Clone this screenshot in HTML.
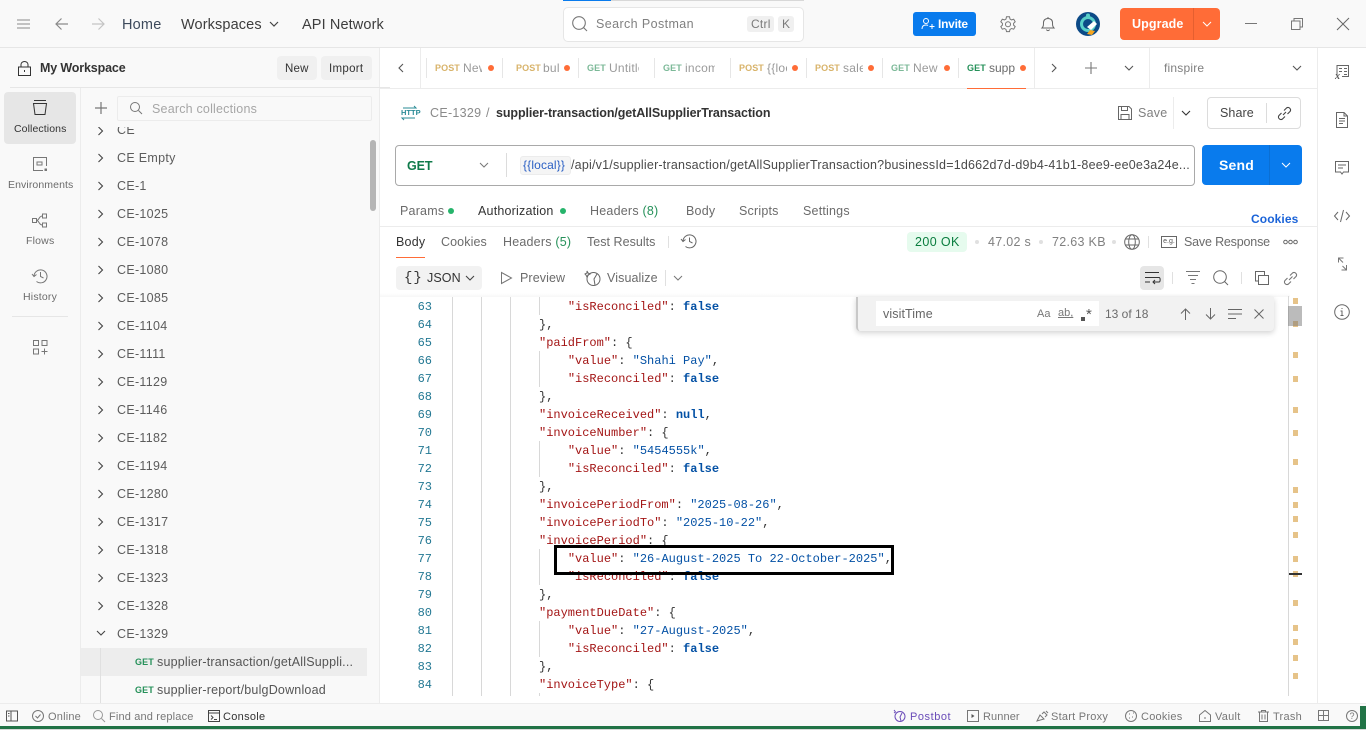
<!DOCTYPE html>
<html><head><meta charset="utf-8"><title>Postman</title>
<style>
html,body{margin:0;padding:0;background:#fff;}
body{width:1366px;height:730px;overflow:hidden;position:relative;font-family:"Liberation Sans",sans-serif;font-size:12px;color:#6b6b6b;}
.a{position:absolute;}
.t{position:absolute;white-space:nowrap;line-height:16px;letter-spacing:.25px;}
svg.a{fill:none;stroke:#6b6b6b;stroke-width:1;overflow:visible;}
.c{left:117px;color:#5c5c5c;font-size:12.5px;letter-spacing:.3px;}
.m{font-size:9px;font-weight:bold;letter-spacing:.1px;}
.p{color:#d8b36a;}.g{color:#7cb998;}
.n{color:#9a9a9a;overflow:hidden;}
.d{position:absolute;width:6px;height:6px;border-radius:50%;background:#ff6c37;top:65px;}
.s{position:absolute;width:1px;height:20px;top:58px;background:#e6e6e6;}
.mk{position:absolute;left:1293px;width:5px;height:6px;background:#e6c389;}
#code{position:absolute;margin:0;font:12px/18px "Liberation Mono",monospace;color:#333;white-space:pre;}
#nums{position:absolute;width:36px;margin:0;font:12px/18px "Liberation Mono",monospace;color:#237893;text-align:right;white-space:pre;}
.k{color:#a31515;}.v{color:#0451a5;}.b{color:#0451a5;font-weight:bold;}
</style></head><body>

<!-- top bar -->
<div class="a" style="left:0;top:0;width:1366px;height:47px;background:#f9f9f9;border-bottom:1px solid #e6e6e6;"></div>
<div class="a" style="left:563px;top:0;width:48px;height:1px;background:#097bed;"></div>
<div class="a" style="left:611px;top:0;width:193px;height:1px;background:#d8d8d8;"></div>
<svg class="a" style="left:17px;top:18px" width="14" height="12"><path d="M0 2h13M0 6h13M0 10h13" stroke="#8a8a8a"/></svg>
<svg class="a" style="left:55px;top:17px" width="14" height="14"><path d="M13 7H1M6.500 1.500L1 7l5.500 5.500" stroke="#8a8a8a" stroke-width="1.200"/></svg>
<svg class="a" style="left:91px;top:17px" width="14" height="14"><path d="M1 7h12M7.500 1.500L13 7l-5.500 5.500" stroke="#c4c4c4" stroke-width="1.200"/></svg>
<div class="t" style="left:122px;top:17px;font-size:14.500px;color:#3d4a5c;letter-spacing:.2px;">Home</div>
<div class="t" style="left:181px;top:17px;font-size:14.500px;color:#3d3d3d;letter-spacing:.12px;">Workspaces</div>
<svg class="a" style="left:269px;top:21px" width="10" height="7"><path d="M1 1l4 4 4-4" stroke="#444" stroke-width="1.200"/></svg>
<div class="t" style="left:302px;top:17px;font-size:14.500px;color:#3d3d3d;letter-spacing:.12px;">API Network</div>

<div class="a" style="left:563px;top:7px;width:239px;height:33px;background:#fff;border:1px solid #e6e6e6;border-radius:5px;"></div>
<svg class="a" style="left:572px;top:16px" width="16" height="16"><circle cx="7" cy="7" r="6.300" stroke="#777" stroke-width="1.100"/><path d="M11.500 11.500L15 15" stroke="#777" stroke-width="1.100"/></svg>
<div class="t" style="left:596px;top:16px;font-size:12.500px;color:#808080;letter-spacing:.4px;">Search Postman</div>
<div class="a" style="left:747px;top:16px;width:27px;height:16px;background:#f0f0f0;border-radius:3px;"></div>
<div class="t" style="left:751px;top:16px;font-size:12px;color:#7a7a7a;">Ctrl</div>
<div class="a" style="left:778px;top:16px;width:16px;height:16px;background:#f0f0f0;border-radius:3px;"></div>
<div class="t" style="left:782px;top:16px;font-size:12px;color:#7a7a7a;">K</div>

<div class="a" style="left:913px;top:12px;width:63px;height:24px;background:#097bed;border-radius:3px;"></div>
<svg class="a" style="left:921px;top:18px" width="14" height="12"><circle cx="5" cy="3" r="2.500" stroke="#fff"/><path d="M1 11c0-3 2-4 4-4 1 0 1.600.2 2 .5M11 6v5M8.500 8.500h5" stroke="#fff"/></svg>
<div class="t" style="left:938px;top:16px;font-size:12px;font-weight:bold;color:#fff;letter-spacing:-.25px;">Invite</div>
<svg class="a" style="left:1000px;top:16px" width="16" height="16"><path d="M6.500 .8h3l.5 2.200 1.600.9 2.100-.7 1.500 2.600-1.600 1.500v1.800l1.600 1.500-1.500 2.600-2.100-.7-1.600.9-.5 2.200h-3l-.5-2.200-1.600-.9-2.100.7L.8 10.600l1.600-1.500V7.300L.8 5.800l1.500-2.600 2.100.7L6 3z" stroke="#777"/><circle cx="8" cy="8.200" r="2.500" stroke="#777"/></svg>
<svg class="a" style="left:1041px;top:16px" width="14" height="16"><path d="M1 12h12c-1.500-1.500-1.500-3-1.500-5.500C11.500 4 9.500 2.500 7 2.500S2.500 4 2.500 6.500C2.500 9 2.500 10.500 1 12zM5.500 13.500c.5 1.500 2.500 1.500 3 0M7 1v1.500" stroke="#666"/></svg>
<svg class="a" style="left:1076px;top:12px" width="24" height="24"><circle cx="12" cy="12" r="12" fill="#0c4a87" stroke="none"/><circle cx="12" cy="12" r="6.500" stroke="#58cfc8" stroke-width="3"/><circle cx="12" cy="3.500" r="2" fill="#58cfc8" stroke="none"/><path d="M11 15l7-6 3 3-6 6z" fill="#fff" stroke="none"/><path d="M11 22l3-4 5 1-3 4z" fill="#f8a51f" stroke="none"/></svg>
<div class="a" style="left:1120px;top:8px;width:100px;height:32px;background:#ff6c37;border-radius:4px;"></div>
<div class="a" style="left:1193px;top:8px;width:1px;height:32px;background:#e55f2f;"></div>
<div class="t" style="left:1132px;top:16px;font-size:12.500px;font-weight:bold;color:#fff;letter-spacing:.1px;">Upgrade</div>
<svg class="a" style="left:1202px;top:21px" width="10" height="7"><path d="M1 1l4 4 4-4" stroke="#fff"/></svg>
<div class="a" style="left:1245px;top:23px;width:12px;height:1px;background:#777;"></div>
<svg class="a" style="left:1291px;top:18px" width="12" height="12"><path d="M.5 3h8.500v8.500H.5zM3 3V.500h8.500V9H9" stroke="#777"/></svg>
<svg class="a" style="left:1337px;top:18px" width="12" height="12"><path d="M0 0l12 12M12 0L0 12" stroke="#666"/></svg>

<!-- sidebar background -->
<div class="a" style="left:0;top:48px;width:380px;height:655px;background:#f9f9f9;border-right:1px solid #ececec;box-sizing:border-box;"></div>
<div class="a" style="left:10px;top:87px;width:380px;height:1px;background:#e6e6e6;"></div>
<div class="a" style="left:80px;top:88px;width:1px;height:615px;background:#ececec;"></div>
<svg class="a" style="left:18px;top:61px" width="13" height="15"><path d="M.5 6h12v8.500H.5zM3 6V3.500a3.500 3 0 0 1 7 0V6M6.500 9v2" stroke="#333"/></svg>
<div class="t" style="left:40px;top:60px;font-size:12.500px;font-weight:bold;color:#333;letter-spacing:-.15px;">My Workspace</div>
<div class="a" style="left:277px;top:56px;width:40px;height:24px;background:#f0f0f0;border-radius:4px;"></div>
<div class="t" style="left:285px;top:61px;color:#333;font-size:11.500px;letter-spacing:.2px;">New</div>
<div class="a" style="left:321px;top:56px;width:51px;height:24px;background:#f0f0f0;border-radius:4px;"></div>
<div class="t" style="left:329px;top:61px;color:#333;font-size:11.500px;letter-spacing:.3px;">Import</div>

<!-- rail -->
<div class="a" style="left:4px;top:92px;width:72px;height:52px;background:#e6e6e6;border-radius:4px;"></div>
<svg class="a" style="left:33px;top:100px" width="14" height="15"><path d="M1 .5h12M.5 3.500h13l-1.500 11H2z" stroke="#333"/></svg>
<div class="t" style="left:14px;top:121px;font-size:10.500px;color:#333;letter-spacing:.1px;">Collections</div>
<svg class="a" style="left:33px;top:157px" width="14" height="14"><path d="M13.500 9V.5H.5v13H10M4 5h5v3H4z" stroke="#777"/><path d="M11.500 11.500h2.500v2.500h-2.500z" fill="#777" stroke="none"/></svg>
<div class="t" style="left:8px;top:177px;font-size:10.500px;color:#6b6b6b;letter-spacing:.1px;">Environments</div>
<svg class="a" style="left:32px;top:213px" width="16" height="15"><path d="M.5 5.500h4v4h-4zM10.500 1h4v4h-4zM10.500 10h4v4h-4zM4.500 7.500c3 0 2-4.500 6-4.500M4.500 7.500c3 0 2 4.500 6 4.500" stroke="#777"/></svg>
<div class="t" style="left:26px;top:233px;font-size:10.500px;color:#6b6b6b;letter-spacing:.2px;">Flows</div>
<svg class="a" style="left:32px;top:268px" width="16" height="16"><path d="M2 8.500A6.500 6.500 0 1 1 4.500 13.500M0 6l2 2.500L4.500 6.500M8.500 4v4.500l3 1.500" stroke="#777"/></svg>
<div class="t" style="left:23px;top:289px;font-size:10.500px;color:#6b6b6b;letter-spacing:.2px;">History</div>
<div class="a" style="left:12px;top:316px;width:56px;height:1px;background:#e6e6e6;"></div>
<svg class="a" style="left:33px;top:340px" width="15" height="15"><path d="M.5.500h5v5h-5zM9 .5h5v5H9zM.5 9h5v5h-5zM8.500 11.500h6M11.500 8.500v6" stroke="#777"/></svg>

<!-- collections search -->
<svg class="a" style="left:95px;top:102px" width="12" height="12"><path d="M6 0v12M0 6h12" stroke="#777" stroke-width="1.200"/></svg>
<div class="a" style="left:117px;top:96px;width:253px;height:23px;border:1px solid #ececec;border-radius:2px;"></div>
<svg class="a" style="left:130px;top:102px" width="12" height="12"><circle cx="5" cy="5" r="4.500" stroke="#777"/><path d="M8.500 8.500L12 12" stroke="#777"/></svg>
<div class="t" style="left:152px;top:101px;font-size:12.500px;color:#a6a6a6;letter-spacing:.2px;">Search collections</div>

<!-- tree -->
<div class="a" style="left:81px;top:122px;width:290px;height:581px;overflow:hidden;">
 <div class="a" style="left:0;top:526px;width:286px;height:28px;background:#ededed;"></div>
 <div class="a" style="left:19px;top:526px;width:1px;height:55px;background:#e0e0e0;"></div>
 <svg class="a" style="left:16px;top:4px" width="8" height="10"><path d="M1.500 1l4 4-4 4" stroke="#444" stroke-width="1.100"/></svg>
 <svg class="a" style="left:16px;top:31px" width="8" height="10"><path d="M1.500 1l4 4-4 4" stroke="#444" stroke-width="1.100"/></svg>
 <svg class="a" style="left:16px;top:59px" width="8" height="10"><path d="M1.500 1l4 4-4 4" stroke="#444" stroke-width="1.100"/></svg>
 <svg class="a" style="left:16px;top:87px" width="8" height="10"><path d="M1.500 1l4 4-4 4" stroke="#444" stroke-width="1.100"/></svg>
 <svg class="a" style="left:16px;top:115px" width="8" height="10"><path d="M1.500 1l4 4-4 4" stroke="#444" stroke-width="1.100"/></svg>
 <svg class="a" style="left:16px;top:143px" width="8" height="10"><path d="M1.500 1l4 4-4 4" stroke="#444" stroke-width="1.100"/></svg>
 <svg class="a" style="left:16px;top:171px" width="8" height="10"><path d="M1.500 1l4 4-4 4" stroke="#444" stroke-width="1.100"/></svg>
 <svg class="a" style="left:16px;top:199px" width="8" height="10"><path d="M1.500 1l4 4-4 4" stroke="#444" stroke-width="1.100"/></svg>
 <svg class="a" style="left:16px;top:227px" width="8" height="10"><path d="M1.500 1l4 4-4 4" stroke="#444" stroke-width="1.100"/></svg>
 <svg class="a" style="left:16px;top:255px" width="8" height="10"><path d="M1.500 1l4 4-4 4" stroke="#444" stroke-width="1.100"/></svg>
 <svg class="a" style="left:16px;top:283px" width="8" height="10"><path d="M1.500 1l4 4-4 4" stroke="#444" stroke-width="1.100"/></svg>
 <svg class="a" style="left:16px;top:311px" width="8" height="10"><path d="M1.500 1l4 4-4 4" stroke="#444" stroke-width="1.100"/></svg>
 <svg class="a" style="left:16px;top:339px" width="8" height="10"><path d="M1.500 1l4 4-4 4" stroke="#444" stroke-width="1.100"/></svg>
 <svg class="a" style="left:16px;top:367px" width="8" height="10"><path d="M1.500 1l4 4-4 4" stroke="#444" stroke-width="1.100"/></svg>
 <svg class="a" style="left:16px;top:395px" width="8" height="10"><path d="M1.500 1l4 4-4 4" stroke="#444" stroke-width="1.100"/></svg>
 <svg class="a" style="left:16px;top:423px" width="8" height="10"><path d="M1.500 1l4 4-4 4" stroke="#444" stroke-width="1.100"/></svg>
 <svg class="a" style="left:16px;top:451px" width="8" height="10"><path d="M1.500 1l4 4-4 4" stroke="#444" stroke-width="1.100"/></svg>
 <svg class="a" style="left:16px;top:479px" width="8" height="10"><path d="M1.500 1l4 4-4 4" stroke="#444" stroke-width="1.100"/></svg>
 <svg class="a" style="left:15px;top:508px" width="10" height="7"><path d="M1 1l4 4 4-4" stroke="#444" stroke-width="1.100"/></svg>
 <div class="t c" style="left:36px;top:0px;">CE</div>
 <div class="t c" style="left:36px;top:28px;">CE Empty</div>
 <div class="t c" style="left:36px;top:56px;">CE-1</div>
 <div class="t c" style="left:36px;top:84px;">CE-1025</div>
 <div class="t c" style="left:36px;top:112px;">CE-1078</div>
 <div class="t c" style="left:36px;top:140px;">CE-1080</div>
 <div class="t c" style="left:36px;top:168px;">CE-1085</div>
 <div class="t c" style="left:36px;top:196px;">CE-1104</div>
 <div class="t c" style="left:36px;top:224px;">CE-1111</div>
 <div class="t c" style="left:36px;top:252px;">CE-1129</div>
 <div class="t c" style="left:36px;top:280px;">CE-1146</div>
 <div class="t c" style="left:36px;top:308px;">CE-1182</div>
 <div class="t c" style="left:36px;top:336px;">CE-1194</div>
 <div class="t c" style="left:36px;top:364px;">CE-1280</div>
 <div class="t c" style="left:36px;top:392px;">CE-1317</div>
 <div class="t c" style="left:36px;top:420px;">CE-1318</div>
 <div class="t c" style="left:36px;top:448px;">CE-1323</div>
 <div class="t c" style="left:36px;top:476px;">CE-1328</div>
 <div class="t c" style="left:36px;top:504px;">CE-1329</div>
 <div class="t m" style="left:54px;top:532px;color:#26915a;">GET</div>
 <div class="t" style="left:76px;top:532px;font-size:12.500px;color:#555;letter-spacing:.2px;">supplier-transaction/getAllSuppli...</div>
 <div class="t m" style="left:54px;top:560px;color:#26915a;">GET</div>
 <div class="t" style="left:76px;top:560px;font-size:12.500px;color:#555;letter-spacing:.2px;">supplier-report/bulgDownload</div>
</div>
<div class="a" style="left:81px;top:122px;width:289px;height:5px;background:#f9f9f9;"></div>
<div class="a" style="left:370px;top:140px;width:6px;height:71px;background:#b5b5b5;border-radius:3px;"></div>

<!-- tabs row -->
<div class="a" style="left:380px;top:88px;width:937px;height:1px;background:#ececec;"></div>
<div class="a" style="left:420px;top:48px;width:1px;height:40px;background:#ececec;"></div>
<div class="a" style="left:1034px;top:48px;width:1px;height:40px;background:#ececec;"></div>
<div class="a" style="left:1149px;top:48px;width:1px;height:40px;background:#ececec;"></div>
<svg class="a" style="left:397px;top:63px" width="7" height="10"><path d="M6 1L2 5l4 4" stroke="#555" stroke-width="1.100"/></svg>
<div class="s" style="left:426px"></div><div class="s" style="left:502px"></div><div class="s" style="left:578px"></div><div class="s" style="left:654px"></div><div class="s" style="left:730px"></div><div class="s" style="left:806px"></div><div class="s" style="left:882px"></div><div class="s" style="left:958px"></div>

<div class="t m p" style="left:435px;top:60px;">POST</div><div class="t n" style="left:463px;top:60px;width:19px;">New</div><div class="d" style="left:488px"></div>
<div class="t m p" style="left:516px;top:60px;">POST</div><div class="t n" style="left:543px;top:60px;width:16px;">bulk</div><div class="d" style="left:564px"></div>
<div class="t m g" style="left:587px;top:60px;">GET</div><div class="t n" style="left:609px;top:60px;width:30px;">Untitled</div>
<div class="t m g" style="left:663px;top:60px;">GET</div><div class="t n" style="left:685px;top:60px;width:30px;">income</div>
<div class="t m p" style="left:739px;top:60px;">POST</div><div class="t n" style="left:767px;top:60px;width:20px;">{{local}}</div><div class="d" style="left:792px"></div>
<div class="t m p" style="left:815px;top:60px;">POST</div><div class="t n" style="left:843px;top:60px;width:20px;">sales</div><div class="d" style="left:868px"></div>
<div class="t m g" style="left:891px;top:60px;">GET</div><div class="t n" style="left:913px;top:60px;width:25px;">New</div><div class="d" style="left:944px"></div>
<div class="t m" style="left:967px;top:60px;color:#26915a;">GET</div><div class="t n" style="left:989px;top:60px;width:27px;color:#6b6b6b;letter-spacing:0;">supp</div><div class="d" style="left:1020px"></div>
<div class="a" style="left:967px;top:88px;width:59px;height:1px;background:#ff6c37;"></div>
<svg class="a" style="left:1051px;top:63px" width="7" height="10"><path d="M1 1l4 4-4 4" stroke="#555" stroke-width="1.100"/></svg>
<svg class="a" style="left:1085px;top:62px" width="12" height="12"><path d="M6 0v12M0 6h12" stroke="#777" stroke-width="1.100"/></svg>
<svg class="a" style="left:1124px;top:65px" width="10" height="7"><path d="M1 1l4 4 4-4" stroke="#555" stroke-width="1.100"/></svg>
<div class="t" style="left:1164px;top:60px;color:#808080;letter-spacing:.2px;">finspire</div>
<svg class="a" style="left:1292px;top:65px" width="10" height="7"><path d="M1 1l4 4 4-4" stroke="#555" stroke-width="1.100"/></svg>

<!-- request title -->
<svg class="a" style="left:400px;top:105px" width="18" height="16"><path d="M3 3h13l-2-2M15 13H2l2 2" stroke="#2a8b96"/></svg>
<div class="a" style="left:401px;top:109px;font-size:7.500px;line-height:8px;font-weight:bold;color:#2a8b96;">HTTP</div>
<div class="t" style="left:430px;top:105px;font-size:12.500px;color:#8a8a8a;letter-spacing:.3px;">CE-1329</div>
<div class="t" style="left:486px;top:105px;font-size:12.500px;color:#8a8a8a;">/</div>
<div class="t" style="left:496px;top:105px;font-size:12.500px;font-weight:bold;color:#333;letter-spacing:-.09px;">supplier-transaction/getAllSupplierTransaction</div>
<svg class="a" style="left:1118px;top:106px" width="14" height="14"><path d="M.5.500h10.500l2.500 2.500v10.500H.5zM3.500.5v4h6v-4M3 13.500v-5h8v5" stroke="#666"/></svg>
<div class="t" style="left:1138px;top:105px;color:#808080;font-size:12.500px;">Save</div>
<div class="a" style="left:1173px;top:97px;width:1px;height:32px;background:#ececec;"></div>
<svg class="a" style="left:1181px;top:110px" width="10" height="7"><path d="M1 1l4 4 4-4" stroke="#333" stroke-width="1.100"/></svg>
<div class="a" style="left:1207px;top:97px;width:92px;height:30px;border:1px solid #dcdcdc;border-radius:4px;"></div>
<div class="t" style="left:1220px;top:105px;color:#444;font-size:12.500px;letter-spacing:.1px;">Share</div>
<div class="a" style="left:1266px;top:103px;width:1px;height:20px;background:#dcdcdc;"></div>
<svg class="a" style="left:1277px;top:106px" width="15" height="15"><path d="M6 9l3-3M4.500 7L2 9.500a2.500 2.500 0 0 0 3.500 3.500L8 10.500M7 4.500L9.500 2A2.500 2.500 0 0 1 13 5.500L10.500 8" stroke="#444" stroke-width="1.100"/></svg>

<!-- URL bar -->
<div class="a" style="left:395px;top:145px;width:798px;height:39px;border:1px solid #a9a9a9;border-radius:4px;"></div>
<div class="t" style="left:407px;top:158px;font-size:12.500px;font-weight:bold;color:#0f7a4a;letter-spacing:-.1px;">GET</div>
<svg class="a" style="left:479px;top:162px" width="10" height="7"><path d="M1 1l4 4 4-4" stroke="#777"/></svg>
<div class="a" style="left:506px;top:153px;width:1px;height:24px;background:#dcdcdc;"></div>
<div class="a" style="left:520px;top:156px;width:49px;height:17px;background:#f5f5f5;border:1px solid #ececec;border-radius:3px;"></div>
<div class="t" style="left:523px;top:157px;color:#2a5fc4;font-size:12px;letter-spacing:.15px;">{{local}}</div>
<div class="t" style="left:571px;top:157px;width:620px;overflow:hidden;color:#4a4a4a;font-size:12.500px;letter-spacing:.21px;">/api/v1/supplier-transaction/getAllSupplierTransaction?businessId=1d662d7d-d9b4-41b1-8ee9-ee0e3a24e...</div>
<div class="a" style="left:1202px;top:145px;width:100px;height:40px;background:#097bed;border-radius:4px;"></div>
<div class="a" style="left:1269px;top:145px;width:1px;height:40px;background:#0a6fd4;"></div>
<div class="t" style="left:1219px;top:157px;font-size:14px;font-weight:bold;color:#fff;letter-spacing:.2px;">Send</div>
<svg class="a" style="left:1281px;top:162px" width="10" height="7"><path d="M1 1l4 4 4-4" stroke="#fff"/></svg>

<!-- request tabs -->
<div class="t" style="left:400px;top:203px;color:#6b6b6b;font-size:12.500px;letter-spacing:.2px;">Params</div>
<div class="a" style="left:448px;top:208px;width:6px;height:6px;border-radius:50%;background:#26b46b;"></div>
<div class="t" style="left:478px;top:203px;color:#333;font-size:12.500px;letter-spacing:.2px;">Authorization</div>
<div class="a" style="left:560px;top:208px;width:6px;height:6px;border-radius:50%;background:#26b46b;"></div>
<div class="t" style="left:590px;top:203px;color:#6b6b6b;font-size:12.500px;letter-spacing:.22px;">Headers <span style="color:#26915a;">(8)</span></div>
<div class="t" style="left:686px;top:203px;color:#6b6b6b;font-size:12.500px;letter-spacing:.2px;">Body</div>
<div class="t" style="left:739px;top:203px;color:#6b6b6b;font-size:12.500px;letter-spacing:.2px;">Scripts</div>
<div class="t" style="left:803px;top:203px;color:#6b6b6b;font-size:12.500px;letter-spacing:.2px;">Settings</div>
<div class="t" style="left:1251px;top:211px;color:#1a63d8;font-size:12px;font-weight:bold;letter-spacing:.1px;">Cookies</div>
<div class="a" style="left:380px;top:226px;width:937px;height:1px;background:#ececec;"></div>

<!-- response tabs -->
<div class="t" style="left:396px;top:234px;color:#333;font-size:12.500px;letter-spacing:.2px;">Body</div>
<div class="a" style="left:396px;top:257px;width:29px;height:1px;background:#ff6c37;"></div>
<div class="t" style="left:441px;top:234px;font-size:12.500px;color:#6b6b6b;letter-spacing:.1px;">Cookies</div>
<div class="t" style="left:503px;top:234px;font-size:12.500px;color:#6b6b6b;letter-spacing:.2px;">Headers <span style="color:#26915a;">(5)</span></div>
<div class="t" style="left:587px;top:234px;font-size:12.500px;color:#6b6b6b;letter-spacing:.03px;">Test Results</div>
<div class="a" style="left:668px;top:236px;width:1px;height:12px;background:#e0e0e0;"></div>
<svg class="a" style="left:681px;top:234px" width="16" height="15"><path d="M2 7.500A6.500 6.500 0 1 1 4.500 12.500M0 5l2 2.500L4.500 5.500M8.500 3.500v4l3 1.500" stroke="#666"/></svg>
<div class="a" style="left:907px;top:232px;width:60px;height:20px;background:#e6fbee;border-radius:4px;"></div>
<div class="t" style="left:915px;top:234px;font-size:12.500px;color:#0a7d3e;letter-spacing:.4px;">200 OK</div>
<div class="a" style="left:975px;top:240px;width:4px;height:4px;border-radius:50%;background:#e0e0e0;"></div>
<div class="t" style="left:988px;top:234px;font-size:12.500px;color:#808080;letter-spacing:.3px;">47.02 s</div>
<div class="a" style="left:1039px;top:240px;width:4px;height:4px;border-radius:50%;background:#e0e0e0;"></div>
<div class="t" style="left:1052px;top:234px;font-size:12.500px;color:#808080;letter-spacing:.3px;">72.63 KB</div>
<div class="a" style="left:1112px;top:240px;width:4px;height:4px;border-radius:50%;background:#e0e0e0;"></div>
<svg class="a" style="left:1124px;top:234px" width="16" height="16"><circle cx="8" cy="8" r="7.300" stroke="#666"/><ellipse cx="8" cy="8" rx="3.300" ry="7.300" stroke="#666"/><path d="M1.500 5h13M1.500 11h13" stroke="#666"/></svg>
<div class="a" style="left:1148px;top:236px;width:1px;height:12px;background:#e0e0e0;"></div>
<div class="a" style="left:1161px;top:236px;width:14px;height:10px;border:1px solid #666;font-size:7px;line-height:10px;text-align:center;color:#555;">e.g.</div>
<div class="t" style="left:1184px;top:234px;font-size:12.500px;color:#6b6b6b;letter-spacing:-.18px;">Save Response</div>
<svg class="a" style="left:1283px;top:239px" width="15" height="6"><circle cx="2.500" cy="3" r="1.800" stroke="#666"/><circle cx="7.500" cy="3" r="1.800" stroke="#666"/><circle cx="12.500" cy="3" r="1.800" stroke="#666"/></svg>

<!-- response toolbar -->
<div class="a" style="left:396px;top:266px;width:86px;height:24px;background:#f2f2f2;border-radius:4px;"></div>
<div class="t" style="left:404px;top:270px;font-size:14px;color:#333;letter-spacing:1px;font-family:'Liberation Mono',monospace;">{}</div>
<div class="t" style="left:427px;top:270px;font-size:12.500px;color:#333;letter-spacing:.1px;">JSON</div>
<svg class="a" style="left:465px;top:275px" width="10" height="7"><path d="M1 1l4 4 4-4" stroke="#444" stroke-width="1.100"/></svg>
<svg class="a" style="left:501px;top:272px" width="11" height="12"><path d="M.5.500v11l10-5.500z" stroke="#777"/></svg>
<div class="t" style="left:520px;top:270px;font-size:12.500px;color:#6b6b6b;letter-spacing:.1px;">Preview</div>
<svg class="a" style="left:585px;top:270px" width="16" height="16"><circle cx="8.500" cy="9" r="6.500" stroke="#666"/><path d="M12 4l-3 5 1 6M2 1l1 2 2 1-2 1-1 2-1-2-1-1 2-1z" stroke="#666"/></svg>
<div class="t" style="left:607px;top:270px;font-size:12.500px;color:#6b6b6b;letter-spacing:.1px;">Visualize</div>
<div class="a" style="left:665px;top:270px;width:1px;height:16px;background:#e0e0e0;"></div>
<svg class="a" style="left:673px;top:275px" width="10" height="7"><path d="M1 1l4 4 4-4" stroke="#777"/></svg>
<div class="a" style="left:1140px;top:266px;width:24px;height:24px;background:#e6e6e6;border-radius:4px;"></div>
<svg class="a" style="left:1145px;top:272px" width="15" height="12"><path d="M0 .5h14M0 5.500h14c1.500 0 1.500 4.500 0 4.500H8M10 8l-2 2 2 2M0 10h5" stroke="#333"/></svg>
<div class="a" style="left:1172px;top:272px;width:1px;height:12px;background:#e0e0e0;"></div>
<svg class="a" style="left:1186px;top:271px" width="14" height="13"><path d="M0 .5h14M2 4.500h10M4 8.500h6M5.500 12.500h3" stroke="#777"/></svg>
<svg class="a" style="left:1213px;top:270px" width="16" height="16"><circle cx="7" cy="7" r="6.300" stroke="#666"/><path d="M11.500 11.500L15 15" stroke="#666"/></svg>
<div class="a" style="left:1241px;top:272px;width:1px;height:12px;background:#e0e0e0;"></div>
<svg class="a" style="left:1255px;top:271px" width="14" height="14"><path d="M3.500 4.500h10v9h-10zM3.500 10H.5V.5h9v4" stroke="#666"/></svg>
<svg class="a" style="left:1283px;top:271px" width="15" height="15"><path d="M6 9l3.500-3.500M4.500 7L2 9.500a2.500 2.500 0 0 0 3.500 3.500L8 10.500M7 4.500L9.500 2A2.500 2.500 0 0 1 13 5.500L10.500 8" stroke="#777" stroke-width="1.100"/></svg>

<!-- code -->
<div class="a" style="left:380px;top:297px;width:937px;height:399px;overflow:hidden;">
<pre id="nums" style="left:16px;top:1px;">63
64
65
66
67
68
69
70
71
72
73
74
75
76
77
78
79
80
81
82
83
84</pre>
<div class="a" style="left:72px;top:0;width:1px;height:399px;background:#d8d8d8;"></div>
<div class="a" style="left:101px;top:0;width:1px;height:399px;background:#d8d8d8;"></div>
<div class="a" style="left:130px;top:0;width:1px;height:399px;background:#d8d8d8;"></div>
<div class="a" style="left:159px;top:0;width:1px;height:18px;background:#d8d8d8;"></div>
<div class="a" style="left:159px;top:54px;width:1px;height:36px;background:#d8d8d8;"></div>
<div class="a" style="left:159px;top:144px;width:1px;height:36px;background:#d8d8d8;"></div>
<div class="a" style="left:159px;top:252px;width:1px;height:36px;background:#d8d8d8;"></div>
<div class="a" style="left:159px;top:324px;width:1px;height:36px;background:#d8d8d8;"></div>
<div class="a" style="left:159px;top:396px;width:1px;height:3px;background:#d8d8d8;"></div>
<pre id="code" style="left:159px;top:1px;">    <span class="k">"isReconciled"</span>: <span class="b">false</span>
},
<span class="k">"paidFrom"</span>: {
    <span class="k">"value"</span>: <span class="v">"Shahi Pay"</span>,
    <span class="k">"isReconciled"</span>: <span class="b">false</span>
},
<span class="k">"invoiceReceived"</span>: <span class="b">null</span>,
<span class="k">"invoiceNumber"</span>: {
    <span class="k">"value"</span>: <span class="v">"5454555k"</span>,
    <span class="k">"isReconciled"</span>: <span class="b">false</span>
},
<span class="k">"invoicePeriodFrom"</span>: <span class="v">"2025-08-26"</span>,
<span class="k">"invoicePeriodTo"</span>: <span class="v">"2025-10-22"</span>,
<span class="k">"invoicePeriod"</span>: {
    <span class="k">"value"</span>: <span class="v">"26-August-2025 To 22-October-2025"</span>,
    <span class="k">"isReconciled"</span>: <span class="b">false</span>
},
<span class="k">"paymentDueDate"</span>: {
    <span class="k">"value"</span>: <span class="v">"27-August-2025"</span>,
    <span class="k">"isReconciled"</span>: <span class="b">false</span>
},
<span class="k">"invoiceType"</span>: {</pre>
</div>
<div class="a" style="left:380px;top:291px;width:910px;height:6px;background:linear-gradient(#fff 0,#fff 40%,#f2f2f2 100%);opacity:.6;"></div>

<!-- black annotation -->
<div class="a" style="left:554px;top:545px;width:334px;height:24px;border:3px solid #000;"></div>

<!-- overview ruler -->
<div class="a" style="left:1288px;top:296px;width:1px;height:400px;background:#d8d8d8;"></div>
<div class="mk" style="top:298px"></div><div class="mk" style="top:321px"></div><div class="mk" style="top:352px"></div><div class="mk" style="top:376px"></div><div class="mk" style="top:407px"></div><div class="mk" style="top:430px"></div><div class="mk" style="top:459px"></div><div class="mk" style="top:487px"></div><div class="mk" style="top:502px"></div><div class="mk" style="top:516px"></div><div class="mk" style="top:532px"></div><div class="mk" style="top:556px"></div><div class="mk" style="top:571px"></div><div class="mk" style="top:600px"></div><div class="mk" style="top:625px"></div><div class="mk" style="top:639px"></div><div class="mk" style="top:655px"></div><div class="mk" style="top:673px"></div>
<div class="a" style="left:1288px;top:306px;width:14px;height:20px;background:rgba(120,120,120,.5);"></div>
<div class="a" style="left:1289px;top:573px;width:13px;height:2px;background:#333;"></div>

<!-- find widget -->
<div class="a" style="left:856px;top:297px;width:418px;height:34px;background:#f2f2f2;border-left:2px solid #c8c8c8;box-sizing:border-box;border-radius:0 0 4px 4px;box-shadow:0 2px 6px rgba(0,0,0,.18);"></div>
<div class="a" style="left:876px;top:301px;width:223px;height:25px;background:#fff;"></div>
<div class="t" style="left:883px;top:306px;color:#666;font-size:12.500px;letter-spacing:.1px;">visitTime</div>
<div class="t" style="left:1037px;top:306px;color:#777;font-size:11px;letter-spacing:0;">Aa</div>
<div class="t" style="left:1058px;top:305px;color:#777;font-size:11px;letter-spacing:0;text-decoration:underline;">ab,</div>
<div class="a" style="left:1081px;top:317px;width:4px;height:4px;background:#555;"></div>
<div class="t" style="left:1086px;top:307px;color:#555;font-size:15px;letter-spacing:0;">*</div>
<div class="t" style="left:1105px;top:306px;color:#6b6b6b;font-size:12px;letter-spacing:0;">13 of 18</div>
<svg class="a" style="left:1180px;top:308px" width="11" height="12"><path d="M5.500 12V1M1 5.500L5.500 1 10 5.500" stroke="#666"/></svg>
<svg class="a" style="left:1205px;top:308px" width="11" height="12"><path d="M5.500 0v11M1 6.500L5.500 11 10 6.500" stroke="#666"/></svg>
<svg class="a" style="left:1228px;top:309px" width="14" height="10"><path d="M0 .5h14M0 5h14M0 9.500h8" stroke="#666"/></svg>
<svg class="a" style="left:1254px;top:309px" width="10" height="10"><path d="M.5.500l9 9M9.500.5l-9 9" stroke="#666"/></svg>

<!-- right rail -->
<div class="a" style="left:1317px;top:48px;width:1px;height:655px;background:#ececec;"></div>
<svg class="a" style="left:1335px;top:65px" width="14" height="15"><path d="M2 9.500V.5h11.500v11H7M4 3.500h3M9 3.500h3M4 6.500h3M9 6.500h3M9 9.500h3" stroke="#666"/></svg>
<div class="a" style="left:1335px;top:72px;font:italic bold 10px/10px 'Liberation Serif',serif;color:#555;">x</div>
<svg class="a" style="left:1336px;top:112px" width="12" height="16"><path d="M.5.500h7.500l3.500 3.500v11.500h-11zM8 .5v3.500h3.500M3 6.500h6M3 9h6M3 11.500h4" stroke="#666"/></svg>
<svg class="a" style="left:1335px;top:161px" width="14" height="14"><path d="M.5.500h13v10.500H8.500L7 13l-1.500-2H.5zM3 4h8M3 7h5" stroke="#666"/></svg>
<svg class="a" style="left:1334px;top:210px" width="16" height="12"><path d="M4 2L.5 6 4 10M12 2l3.500 4-3.500 4M9.500 0l-3 12" stroke="#666"/></svg>
<svg class="a" style="left:1337px;top:257px" width="11" height="14"><path d="M1.500 5.500V1h5M1.500 1l4.500 4.500M9.500 8v5H4.500M9.500 13L5.500 9" stroke="#777"/></svg>
<svg class="a" style="left:1334px;top:304px" width="16" height="16"><circle cx="8" cy="8" r="7.300" stroke="#666"/><path d="M6.500 7H8v4.500M6.500 11.500h3M8 4v1" stroke="#666"/></svg>

<!-- status bar -->
<div class="a" style="left:0;top:703px;width:1366px;height:23px;background:#f9f9f9;border-top:1px solid #ececec;box-sizing:border-box;"></div>
<svg class="a" style="left:6px;top:710px" width="12" height="12"><path d="M.5 1h11v10H.5zM5 1v10M2 3.500h1.500M2 6h1.500" stroke="#555"/></svg>
<svg class="a" style="left:32px;top:710px" width="12" height="12"><circle cx="6" cy="6" r="5.500" stroke="#777"/><path d="M3.500 6l2 2 3-3.500" stroke="#777"/></svg>
<div class="t" style="left:48px;top:709px;font-size:11px;color:#777;letter-spacing:.2px;">Online</div>
<svg class="a" style="left:93px;top:710px" width="12" height="12"><circle cx="5" cy="5" r="4.500" stroke="#999"/><path d="M8.500 8.500L12 12" stroke="#999"/></svg>
<div class="t" style="left:109px;top:709px;font-size:11px;color:#777;letter-spacing:.16px;">Find and replace</div>
<svg class="a" style="left:208px;top:710px" width="12" height="12"><path d="M.5.500h11v11H.5zM.5 3h11M3 5.500l2 2-2 2M6 9.500h3" stroke="#444"/></svg>
<div class="t" style="left:223px;top:709px;font-size:11px;color:#333;letter-spacing:.3px;">Console</div>
<svg class="a" style="left:893px;top:709px" width="13" height="13"><circle cx="7" cy="7.500" r="5" stroke="#6a4cb8"/><path d="M9 4L7 8l1 4M1 1l1.500 2L1 4" stroke="#6a4cb8"/></svg>
<div class="t" style="left:910px;top:709px;font-size:11px;color:#6a4cb8;letter-spacing:.55px;">Postbot</div>
<svg class="a" style="left:967px;top:710px" width="12" height="12"><path d="M.5.500h11v11H.5z" stroke="#777"/><path d="M4.500 4v4l3-2z" fill="#555" stroke="none"/></svg>
<div class="t" style="left:983px;top:709px;font-size:11px;color:#777;letter-spacing:.1px;">Runner</div>
<svg class="a" style="left:1036px;top:710px" width="12" height="12"><path d="M1 11L4 5l4 4zM6 4l2-2 3 3-2 2M10 1l2 2" stroke="#777"/></svg>
<div class="t" style="left:1051px;top:709px;font-size:11px;color:#777;letter-spacing:.25px;">Start Proxy</div>
<svg class="a" style="left:1125px;top:710px" width="12" height="12"><circle cx="6" cy="6" r="5.500" stroke="#777"/><path d="M4 4h1M7 7h1M4 8h1M8 3h1" stroke="#777"/></svg>
<div class="t" style="left:1141px;top:709px;font-size:11px;color:#777;letter-spacing:.25px;">Cookies</div>
<svg class="a" style="left:1199px;top:710px" width="12" height="12"><path d="M.5 5L6 .5 11.500 5v6.500H.5zM6 7v2" stroke="#777"/></svg>
<div class="t" style="left:1215px;top:709px;font-size:11px;color:#777;letter-spacing:.25px;">Vault</div>
<svg class="a" style="left:1258px;top:710px" width="11" height="12"><path d="M0 2h11M3.500 2V.5h4V2M1.500 2v9.500h8V2M4 4.500v5M7 4.500v5" stroke="#777"/></svg>
<div class="t" style="left:1273px;top:709px;font-size:11px;color:#777;letter-spacing:.25px;">Trash</div>
<svg class="a" style="left:1318px;top:710px" width="12" height="12"><path d="M.5.500h10v10H.5zM5.500.5v10M.5 5.500h10" stroke="#777"/></svg>
<svg class="a" style="left:1346px;top:710px" width="12" height="12"><circle cx="6" cy="6" r="5.500" stroke="#777"/></svg>
<div class="a" style="left:1346px;top:710px;width:12px;text-align:center;font-size:9px;line-height:12px;color:#777;">?</div>
<div class="a" style="left:1360px;top:706px;width:6px;height:20px;background:#217346;"></div>
<div class="a" style="left:0;top:726px;width:1366px;height:3px;background:#217346;"></div>
<div class="a" style="left:0;top:729px;width:1366px;height:1px;background:#d8d8d8;"></div>
</body></html>
